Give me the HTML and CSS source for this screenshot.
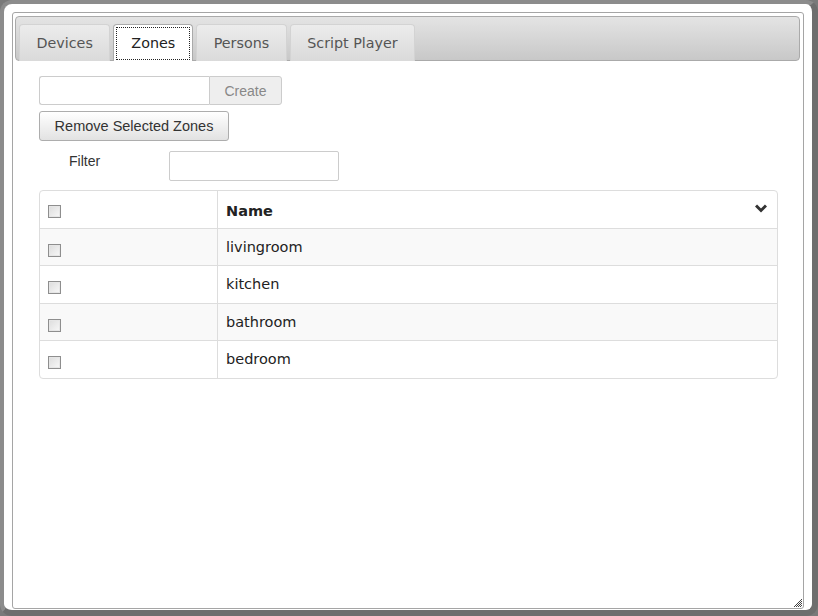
FILE: index.html
```html
<!DOCTYPE html>
<html>
<head>
<meta charset="utf-8">
<link rel="stylesheet" href="styles.css">
</head>
<body>
<div class="window">
  <div class="pane">
    <div class="tabs">
      <ul class="tab-nav">
        <li class="tab">Devices</li>
        <li class="tab active"><span class="focus">Zones</span></li>
        <li class="tab">Persons</li>
        <li class="tab">Script Player</li>
      </ul>
    </div>
    <div class="content">
      <div class="create-row">
        <input class="name-input" type="text">
        <button class="create-btn">Create</button>
      </div>
      <button class="remove-btn">Remove Selected Zones</button>
      <div class="filter-row">
        <span class="filter-label">Filter</span>
        <input class="filter-input" type="text">
      </div>
      <div class="grid">
        <div class="row head">
          <div class="cell check"><span class="cb"></span></div>
          <div class="cell name">Name
            <svg class="chev" width="12" height="9" viewBox="0 0 12 9"><path d="M1 1.5 L6 6.5 L11 1.5" fill="none" stroke="#333" stroke-width="3"/></svg>
          </div>
        </div>
        <div class="row odd">
          <div class="cell check"><span class="cb"></span></div>
          <div class="cell name">livingroom</div>
        </div>
        <div class="row">
          <div class="cell check"><span class="cb"></span></div>
          <div class="cell name">kitchen</div>
        </div>
        <div class="row odd">
          <div class="cell check"><span class="cb"></span></div>
          <div class="cell name">bathroom</div>
        </div>
        <div class="row last">
          <div class="cell check"><span class="cb"></span></div>
          <div class="cell name">bedroom</div>
        </div>
      </div>
    </div>
    <svg class="grip" width="10" height="10" viewBox="0 0 10 10">
      <path d="M9 1 L1 9 M9 3 L3 9 M9 5 L5 9 M9 7 L7 9" stroke="#444" stroke-width="1"/>
    </svg>
  </div>
</div>
</body>
</html>
```
FILE: styles.css
```css
html, body {
  margin: 0;
  padding: 0;
  background: #7a7a7a;
}
.window {
  width: 818px;
  height: 616px;
  box-sizing: border-box;
  border-style: solid;
  border-color: #8c8c8c #6e6e6e #6e6e6e #8c8c8c;
  border-width: 4px 6px 6px 4px;
  border-radius: 12px;
  background: #fff;
  padding: 8px 8px 1px 8px;
}
.pane {
  position: relative;
  height: 100%;
  box-sizing: border-box;
  border: 1px solid #a5a5a5;
  border-radius: 3px;
  padding: 3px 3px 0 2px;
}
.tabs {
  border: 1px solid #aaaaaa;
  border-radius: 4px;
  background: linear-gradient(#e4e4e4, #c8c8c8);
  padding: 7px 2px 0 3px;
  height: 36px;
}
.tab-nav {
  list-style: none;
  margin: 0;
  padding: 0;
  display: flex;
  gap: 3px;
  height: 37px;
}
.tab {
  box-sizing: border-box;
  height: 37px;
  padding: 0 16.5px;
  border: 1px solid #d3d3d3;
  border-bottom: none;
  border-radius: 4px 4px 0 0;
  background: linear-gradient(#ececec, #dadada);
  font-family: "DejaVu Sans", Verdana, sans-serif;
  font-size: 14.3px;
  color: #555;
  display: flex;
  align-items: center;
}
.tab.active {
  background: #fff;
  border-color: #aaa;
  color: #212121;
  padding: 0 2px;
}
.focus {
  border: 1px dotted #222;
  padding: 7px 14px 8px 14px;
}
.content {
  padding: 15px 0 0 24px;
}
.create-row {
  display: flex;
  height: 29px;
}
.name-input {
  box-sizing: border-box;
  width: 170px;
  height: 29px;
  margin: 0;
  border: 1px solid #ccc;
  border-right: none;
  border-radius: 3px 0 0 3px;
  outline: none;
}
.create-btn {
  box-sizing: border-box;
  width: 73px;
  height: 29px;
  margin: 0;
  border: 1px solid #ccc;
  border-radius: 0 3px 3px 0;
  background: #eeeeee;
  color: #888;
  font-family: "Liberation Sans", Arial, sans-serif;
  font-size: 14px;
}
.remove-btn {
  display: block;
  box-sizing: border-box;
  margin-top: 6px;
  width: 190px;
  height: 30px;
  border: 1px solid #adadad;
  border-radius: 3px;
  background: linear-gradient(#ffffff, #e2e2e2);
  color: #333;
  font-family: "Liberation Sans", Arial, sans-serif;
  font-size: 14.5px;
  padding: 0;
}
.filter-row {
  display: flex;
  align-items: flex-start;
  margin-top: 10px;
  height: 30px;
}
.filter-label {
  font-family: "Liberation Sans", Arial, sans-serif;
  font-size: 14px;
  color: #333;
  width: 100px;
  padding-left: 30px;
  padding-top: 2px;
}
.filter-input {
  box-sizing: border-box;
  width: 170px;
  height: 30px;
  margin: 0;
  border: 1px solid #ccc;
  border-radius: 2px;
  outline: none;
}
.grid {
  margin-top: 9px;
  width: 739px;
  box-sizing: border-box;
  border: 1px solid #dddddd;
  border-radius: 4px;
  overflow: hidden;
  font-family: "DejaVu Sans", Verdana, sans-serif;
  font-size: 14.5px;
  color: #222;
}
.row {
  display: flex;
  height: 37.5px;
  border-bottom: 1px solid #dddddd;
  box-sizing: border-box;
}
.row.last {
  border-bottom: none;
  height: 37px;
}
.row.odd {
  background: #f9f9f9;
}
.cell {
  box-sizing: border-box;
}
.check {
  width: 178px;
  border-right: 1px solid #dddddd;
  padding: 15px 0 0 8px;
}
.name {
  flex: 1;
  padding: 10px 0 0 8px;
  position: relative;
}
.head .name {
  font-weight: bold;
  padding-top: 12px;
}
.head .check {
  padding-top: 14px;
}
.cb {
  display: block;
  width: 13px;
  height: 13px;
  box-sizing: border-box;
  border: 1px solid #8e8e8e;
  background: linear-gradient(135deg, #dcdcdc, #f8f8f8);
  box-shadow: inset 0 0 0 1px #e6e6e6;
}
.chev {
  position: absolute;
  right: 10px;
  top: 13px;
}
.grip {
  position: absolute;
  right: 0;
  bottom: 0;
}
```
